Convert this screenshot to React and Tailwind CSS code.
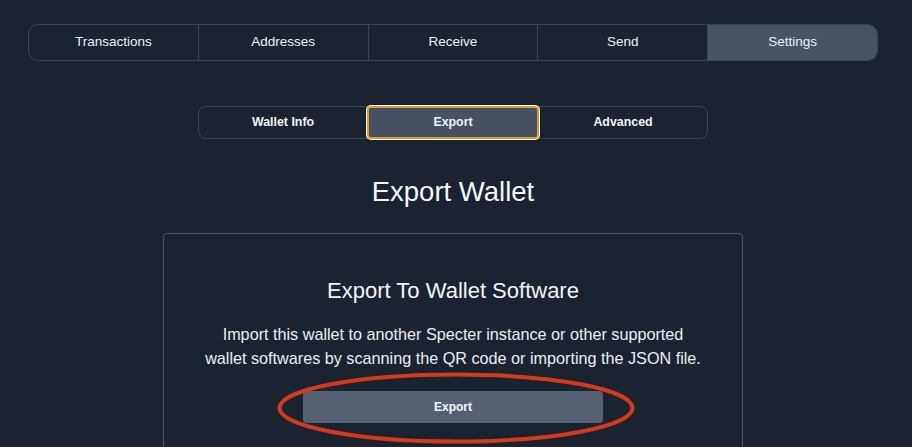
import React from "react";

const navItems = ["Transactions", "Addresses", "Receive", "Send", "Settings"];
const subTabs = ["Wallet Info", "Export", "Advanced"];

export default function App() {
  return (
    <div className="relative min-h-screen w-[912px] h-[447px] overflow-hidden bg-[#1b2330] text-white font-['Liberation_Sans',Arial,sans-serif]">
      <div className="ml-[28px] w-[850px] pt-[24px] flex flex-col items-center">
        {/* Top navigation */}
        <nav className="flex w-full h-[37px] rounded-[10px] border border-[#3a4555] overflow-hidden">
          {navItems.map((item, i) => (
            <button
              key={item}
              className={
                "flex-1 flex items-center justify-center text-[13.5px] text-[#eef0f3] " +
                (i < navItems.length - 1 ? "border-r border-[#3a4555] " : "") +
                (item === "Settings" ? "bg-[#485466]" : "")
              }
            >
              {item}
            </button>
          ))}
        </nav>

        {/* Sub tabs */}
        <div className="mt-[45px] flex w-[510px] h-[33px] rounded-[8px] border border-[#3a4555]">
          {subTabs.map((t) => (
            <button
              key={t}
              className={
                "flex-1 flex items-center justify-center text-[12.4px] font-bold text-[#f3f4f6] " +
                (t === "Export"
                  ? "-my-px bg-[#465163] border-2 border-[#e39a2d] rounded-[4px] ring-1 ring-white"
                  : "")
              }
            >
              {t}
            </button>
          ))}
        </div>

        {/* Heading */}
        <h1 className="mt-[36px] text-[27.5px] leading-[34px] text-[#f5f6f8] font-normal">
          Export Wallet
        </h1>

        {/* Card */}
        <div className="mt-[24px] w-[580px] h-[240px] rounded-[4px] border border-[#4b5667] flex flex-col items-center pt-[44px]">
          <h2 className="text-[22px] leading-[26px] text-[#f3f4f6] font-normal">
            Export To Wallet Software
          </h2>
          <p className="mt-[18px] text-[16.2px] leading-[24px] text-[#eceef1] text-center">
            Import this wallet to another Specter instance or other supported
            <br />
            wallet softwares by scanning the QR code or importing the JSON file.
          </p>
          <button className="mt-[21px] w-[300px] h-[32px] rounded-[4px] bg-[#556172] text-[12px] font-bold text-[#f5f6f8]">
            Export
          </button>
        </div>
      </div>

      {/* Red annotation ellipse */}
      <svg
        className="absolute left-[277px] top-[372px] pointer-events-none"
        width="358"
        height="72"
        viewBox="0 0 358 72"
      >
        <ellipse cx="179" cy="36" rx="176.5" ry="33.5" fill="none" stroke="#d2391d" strokeWidth="4" />
      </svg>
    </div>
  );
}
